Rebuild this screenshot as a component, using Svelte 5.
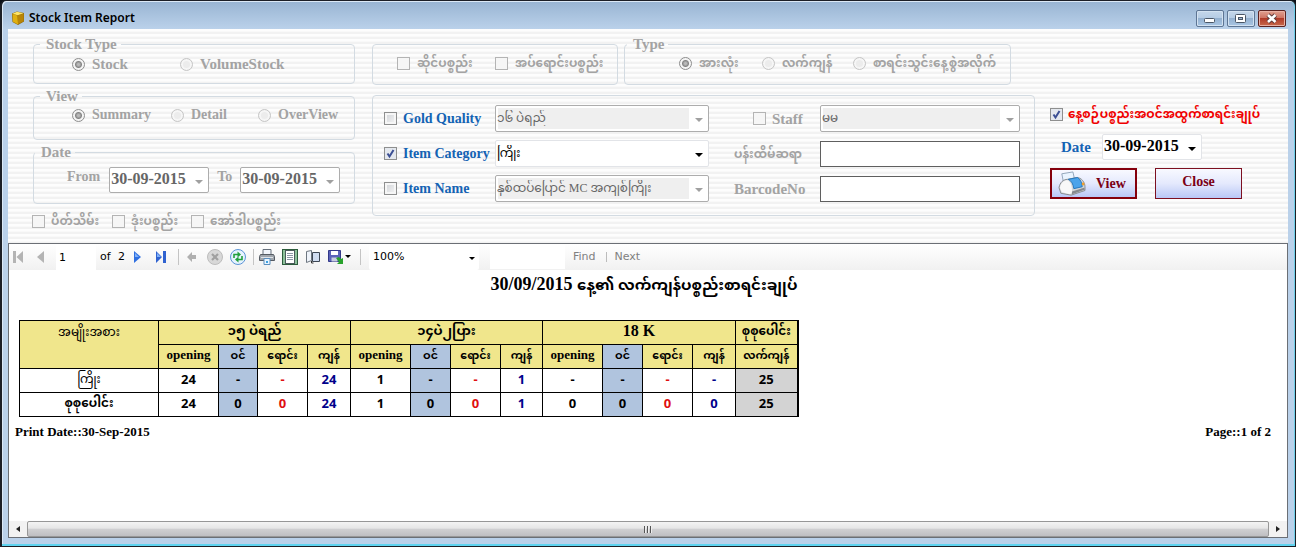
<script>
  const groups = [
    { name: '၁၅ ပဲရည်', item: ['24', '-', '-', '24'], total: ['24', '0', '0', '24'] },
    { name: '၁၄ပဲ၂ပြား', item: ['1', '-', '-', '1'], total: ['1', '0', '0', '1'] },
    { name: '18 K', latin: true, item: ['-', '-', '-', '-'], total: ['0', '0', '0', '0'] }
  ];
  const subheads = ['opening', 'ဝင်', 'ရောင်း', 'ကျန်'];
  const kinds = ['open', 'in', 'sold', 'rest'];
  const rows = [
    { label: 'ကြိုး', key: 'item', sum: '25' },
    { label: 'စုစုပေါင်း', key: 'total', sum: '25' }
  ];
  const widths = [139, 60, 39, 50, 43, 60, 40, 50, 42, 60, 40, 50, 43, 62];
</script>

<div class="window">
  <header class="titlebar">
    <svg class="appicon" viewBox="0 0 14 14" width="14" height="14" aria-hidden="true">
      <path d="M1 2.5 6 .5 13 2v8.5L7 14 1.5 11z" fill="#8a6508" />
      <path d="M1.5 3 6.5 4.5 7 13.5 2 10.7z" fill="#e0b010" />
      <path d="M6.8 4.5 12.7 2.5v7.8L7 13.3z" fill="#b88508" />
      <path d="M1.5 2.7 6 .8l6.5 1.4-5.8 2z" fill="#ffe566" />
    </svg>
    <h1>Stock Item Report</h1>
    <div class="winbtns">
      <button type="button" aria-label="Minimize">
        <svg viewBox="0 0 28 15" width="28" height="15"><rect x="8.500" y="7.500" width="10" height="4" rx="1" fill="#fff" stroke="#4a5666" /></svg>
      </button>
      <button type="button" aria-label="Restore">
        <svg viewBox="0 0 28 15" width="28" height="15"><rect x="8.500" y="3.500" width="10" height="8" rx="1" fill="#fff" stroke="#4a5666" /><rect x="11.500" y="6.500" width="4" height="2" fill="#9fb8d4" stroke="#4a5666" /></svg>
      </button>
      <button type="button" class="x" aria-label="Close window">
        <svg viewBox="0 0 28 15" width="28" height="15"><path d="m10 4 7.500 7M17.500 4 10 11" stroke="#5d3a3a" stroke-width="4.500" /><path d="m10 4 7.500 7M17.500 4 10 11" stroke="#fff" stroke-width="2.600" /></svg>
      </button>
    </div>
  </header>

  <main>
    <form class="filters" onsubmit={(e) => e.preventDefault()}>
      <div class="left">
        <fieldset class="stock" disabled>
          <legend>Stock Type</legend>
          <label><input type="radio" name="stock" checked /> Stock</label>
          <label><input type="radio" name="stock" /> VolumeStock</label>
        </fieldset>
        <fieldset class="view" disabled>
          <legend>View</legend>
          <label><input type="radio" name="view" checked /> Summary</label>
          <label><input type="radio" name="view" /> Detail</label>
          <label><input type="radio" name="view" /> OverView</label>
        </fieldset>
        <fieldset class="dates" disabled>
          <legend>Date</legend>
          <label for="from">From</label>
          <span class="combo off"><input id="from" value="30-09-2015" /></span>
          <label for="to">To</label>
          <span class="combo off"><input id="to" value="30-09-2015" /></span>
        </fieldset>
        <div class="extras">
          <label class="mm"><input type="checkbox" disabled /> ပိတ်သိမ်း</label>
          <label class="mm"><input type="checkbox" disabled /> ဒုံးပစ္စည်း</label>
          <label class="mm"><input type="checkbox" disabled /> အော်ဒါပစ္စည်း</label>
        </div>
      </div>

      <div class="middle">
        <div class="pair">
          <div class="box goods">
            <label class="mm"><input type="checkbox" disabled /> ဆိုင်ပစ္စည်း</label>
            <label class="mm"><input type="checkbox" disabled /> အပ်ရောင်းပစ္စည်း</label>
          </div>
          <fieldset class="type" disabled>
            <legend>Type</legend>
            <label class="mm"><input type="radio" name="type" checked /> အားလုံး</label>
            <label class="mm"><input type="radio" name="type" /> လက်ကျန်</label>
            <label class="mm"><input type="radio" name="type" /> စာရင်းသွင်းနေ့စွဲအလိုက်</label>
          </fieldset>
        </div>
        <div class="box criteria">
          <label class="blue"><input type="checkbox" /> Gold Quality</label>
          <span class="combo off"><select disabled aria-label="Gold Quality"><option>၁၆ ပဲရည်</option></select></span>
          <label class="second staff"><input type="checkbox" disabled /> Staff</label>
          <span class="combo off"><select disabled aria-label="Staff"><option>မမ</option></select></span>

          <label class="blue"><input type="checkbox" checked /> Item Category</label>
          <span class="combo"><select aria-label="Item Category"><option>ကြိုး</option></select></span>
          <label class="second mm" for="smith">ပန်းထိမ်ဆရာ</label>
          <input class="text" id="smith" />

          <label class="blue"><input type="checkbox" /> Item Name</label>
          <span class="combo off"><select disabled aria-label="Item Name"><option>နှစ်ထပ်ပြောင် MC အကျစ်ကြိုး</option></select></span>
          <label class="second" for="barcode">BarcodeNo</label>
          <input class="text" id="barcode" />
        </div>
      </div>

      <div class="right">
        <label class="mm red"><input type="checkbox" checked /> နေ့စဉ်ပစ္စည်းအဝင်အထွက်စာရင်းချုပ်</label>
        <div class="day">
          <label class="blue" for="day">Date</label>
          <span class="combo"><input id="day" value="30-09-2015" /></span>
        </div>
        <div class="actions">
          <button type="submit" class="act default">
            <svg viewBox="0 0 32 28" width="32" height="26" aria-hidden="true">
              <path d="M5 3 17 1l2 9-12 3z" fill="#eaf4ff" stroke="#8fa2b8" />
              <path d="M2 18C3 12 7 9 11 9l10-2c5 0 9 5 9 10v4L15 26 4 24z" fill="#d2d5d8" stroke="#85898e" />
              <path d="M3 18c1-6 5-8 8-8 4 2 5 6 5 13l-2 2-9-2z" fill="#f8f8f8" />
              <path d="M12 9 22 7c3 2 5 6 5 10l-9 2c-1-5-2-8-6-10z" fill="#4ba3ea" stroke="#2275bc" />
              <path d="M16 22 29 18l1 2-14 5z" fill="#85898e" />
              <circle cx="28" cy="14" r="1.500" fill="#f0a030" />
            </svg>
            View
          </button>
          <button type="button" class="act">Close</button>
        </div>
      </div>
    </form>

    <section class="viewer">
      <nav class="toolbar" aria-label="Report toolbar">
        <button type="button" class="first" disabled aria-label="First page"><svg viewBox="0 0 12 12" width="12" height="12"><path d="M1 0h3v12H1zM11 0v12L4.500 6z" fill="#b4b4b4" /></svg></button>
        <button type="button" class="prev" disabled aria-label="Previous page"><svg viewBox="0 0 8 12" width="8" height="12"><path d="M7 0v12L0 6z" fill="#b4b4b4" /></svg></button>
        <input class="pageno" value="1" aria-label="Current page" />
        <span class="of">of</span><span class="count">2</span>
        <button type="button" class="next" aria-label="Next page"><svg viewBox="0 0 8 12" width="8" height="12"><path d="M1 0v12L8 6z" fill="#2f6fe0" /><path d="m2 2 4 4H2z" fill="#7fb0f8" /></svg></button>
        <button type="button" class="last" aria-label="Last page"><svg viewBox="0 0 12 12" width="12" height="12"><path d="M1 0v12l6-6zM8 0h3v12H8z" fill="#2f62d0" /><path d="m2 2 4 4H2z" fill="#7fb0f8" /></svg></button>
        <i class="sep"></i>
        <button type="button" class="back" disabled aria-label="Back"><svg viewBox="0 0 10 10" width="10" height="10"><path d="M0 5 5 0v3h4v4H5v3z" fill="#b0b0b0" /></svg></button>
        <button type="button" class="stop" disabled aria-label="Stop"><svg viewBox="0 0 16 16" width="16" height="16"><circle cx="8" cy="8" r="7.500" fill="#d8d8d8" stroke="#bdbdbd" /><path d="m5 5 6 6m0-6-6 6" stroke="#a0a0a0" stroke-width="2.200" /></svg></button>
        <button type="button" class="refresh" aria-label="Refresh"><svg viewBox="0 0 16 16" width="16" height="16"><circle cx="8" cy="8" r="7.500" fill="#e6f3ff" stroke="#5b94d6" /><path d="M4 9V5.500h4M12 7v3.500H8" fill="none" stroke="#22a03c" stroke-width="1.600" /><path d="M7.500 2.500v6l3.500-3zM8.500 7.500v6L5 10.500z" fill="#22a03c" /></svg></button>
        <i class="sep short"></i>
        <button type="button" class="print" aria-label="Print"><svg viewBox="0 0 16 16" width="16" height="16"><path d="M4 .5h8V6H4z" fill="#f2f6fc" stroke="#66707c" /><path d="M1.500 5.500h13l1 2v4H.5v-4z" fill="#a0a6ad" stroke="#555b63" /><path d="M2 8.500h12" stroke="#dfe4ea" /><path d="M5 9.500h6v6H5z" fill="#e9f5ff" stroke="#5c8fbe" /><path d="M7 12h2v2H7z" fill="#3ea0e0" /></svg></button>
        <button type="button" class="layout" aria-label="Print layout"><svg viewBox="0 0 16 16" width="16" height="16"><rect x=".5" y=".5" width="15" height="15" fill="#8cc09a" stroke="#2c5c3c" /><rect x="3.500" y="1.500" width="9" height="13" fill="#fff" stroke="#4a5a5a" /><path d="M5 4.500h6M5 6.500h6M5 8.500h6M5 10.500h6" stroke="#8a96a4" /></svg></button>
        <button type="button" class="setup" aria-label="Page setup"><svg viewBox="0 0 16 14" width="16" height="14"><path d="M1.500 1.500 6.500.5v10l-5 2z" fill="#eef3fa" stroke="#6d7680" /><path d="M7.500 2.500h7v9h-7z" fill="#cfdcf0" stroke="#3c4653" /><path d="M6.500 11v2h2" fill="none" stroke="#333" /></svg></button>
        <button type="button" class="export" aria-label="Export"><svg viewBox="0 0 23 16" width="23" height="16"><path d="M.5 1.500h12v11H.5z" fill="#5a62b8" stroke="#33398a" /><path d="M3 2h7v4H3z" fill="#fff" /><path d="M3.500 8.500h6v4h-6z" fill="#c9cee0" /><path d="m8 9 3-1 2 2 2-1v6H9l2-2z" fill="#28a22c" /><path d="M17 6h6l-3 3z" fill="#000" /></svg></button>
        <i class="sep"></i>
        <span class="combo zoom"><select aria-label="Zoom"><option>100%</option></select></span>
        <input class="query" aria-label="Find text" />
        <button type="button" class="word" disabled>Find</button>
        <i class="bar"></i>
        <button type="button" class="word" disabled>Next</button>
      </nav>

      <article class="report">
        <h2>30/09/2015 <span>နေ့၏ လက်ကျန်ပစ္စည်းစာရင်းချုပ်</span></h2>
        <table>
          <colgroup>{#each widths as w}<col style="width:{w}px" />{/each}</colgroup>
          <thead>
            <tr>
              <th rowspan="2" class="kind">အမျိုးအစား</th>
              {#each groups as g}<th colspan="4" class="group" class:latin={g.latin}>{g.name}</th>{/each}
              <th>စုစုပေါင်း</th>
            </tr>
            <tr class="sub">
              {#each groups as g}
                {#each subheads as s, i}<th class={kinds[i]}>{s}</th>{/each}
              {/each}
              <th>လက်ကျန်</th>
            </tr>
          </thead>
          <tbody>
            {#each rows as r}
              <tr>
                <th class={r.key}>{r.label}</th>
                {#each groups as g}
                  {#each g[r.key] as v, i}<td class={kinds[i]}>{v}</td>{/each}
                {/each}
                <td class="sum">{r.sum}</td>
              </tr>
            {/each}
          </tbody>
        </table>
        <footer><span>Print Date::30-Sep-2015</span><span>Page::1 of 2</span></footer>
      </article>

      <div class="scroll">
        <button type="button" aria-label="Scroll left"><svg viewBox="0 0 4 6" width="4" height="6"><path d="M4 0v6L0 3z" fill="#222" /></svg></button>
        <div class="thumb"><i></i><i></i><i></i></div>
        <button type="button" aria-label="Scroll right"><svg viewBox="0 0 4 6" width="4" height="6"><path d="M0 0v6l4-3z" fill="#222" /></svg></button>
      </div>
    </section>
  </main>
</div>

<style>
  :global(body) { margin: 0; background: #0b1018; }
  * { box-sizing: border-box; }
  .window {
    min-height: 100vh;
    display: flex;
    flex-direction: column;
    border: 1px solid #1c1f26;
    border-left-width: 2px;
    border-radius: 6px 6px 0 0;
    padding: 0 7px 8px 6px;
    background: linear-gradient(#98b4d2, #bad1ea 28px, #bad1ea);
    box-shadow: inset 0 -2px #5fd4f0, inset 1px 1px #dce9f6, inset -1px 0 #6fd0ea;
    font: bold 15px/16px "Liberation Serif", "Noto Sans Myanmar", serif;
  }
  button, input, select { font: inherit; margin: 0; }
  .titlebar { display: flex; align-items: center; height: 28px; padding: 6px 2px 0 3px; }
  h1 { flex: 1; margin: 0 0 0 4px; font: 600 12px/16px "Noto Sans", sans-serif; color: #000; }
  .winbtns { display: flex; gap: 3px; }
  .winbtns button {
    display: flex; padding: 0; height: 17px; align-items: center; width: 28px; overflow: hidden;
    border: 1px solid #5d7594; border-radius: 2px;
    background: linear-gradient(#c5d7ea, #b4cbe4 50%, #94b1d0 50%, #a9c6e4);
    box-shadow: inset 0 0 0 1px #d3e2f1;
  }
  .winbtns svg { flex: none; margin-left: -1px; }
  .winbtns .x { border-color: #5b2220; background: linear-gradient(#e0a090, #cd7060 50%, #b03a28 50%, #c86a4c); box-shadow: inset 0 0 0 1px #e8b0a4; }

  main { flex: 1; display: flex; flex-direction: column; }
  .filters {
    display: flex;
    height: 214px;
    padding: 8px 0 0 25px;
    color: #a3a3a3;
    background: repeating-linear-gradient(#fdfdfd 0 2px, #f9f9f9 2px 3px, #f2f2f2 3px 5px);
  }
  .left { width: 322px; margin-right: 17px; display: flex; flex-direction: column; }
  .middle { flex: 1; min-width: 0; margin-right: 15px; }
  .right { width: 238px; padding-top: 68px; }
  fieldset, .box { border: 1px solid #d3dbe2; border-radius: 4px; margin: 0; min-width: 0; }
  fieldset { padding: 0; display: flex; }
  legend { padding: 0 4px 0 6px; margin-left: 6px; line-height: 14px; }
  label { display: flex; align-items: center; white-space: nowrap; gap: 7px; }
  .mm { font-size: 12px; }

  input[type='radio'], input[type='checkbox'] {
    appearance: none; flex: none; width: 13px; height: 13px; border: 1px solid #8e8f8f;
    background: linear-gradient(135deg, #cfd2d6, #f6f6f6); box-shadow: inset 0 0 0 2px #f6f6f6;
  }
  input[type='radio'] { border-radius: 50%; }
  input:disabled[type='radio'] { border-color: #c6c6c6; background: #ececec; }
  input:disabled[type='radio']:checked { border-color: #8e8e8e; background: radial-gradient(circle, #b9b9b9 0 1px, #858585 3px, #f4f4f4 4px); box-shadow: none; }
  input:disabled[type='checkbox'] { border-color: #b4b4b4; background: #f6f6f6; }
  input[type='checkbox']:checked {
    background: url("data:image/svg+xml,%3Csvg xmlns='http://www.w3.org/2000/svg' viewBox='0 0 11 11'%3E%3Cpath d='M2.500 5.500 4.500 8.500 8.500 2' fill='none' stroke='%233b4f94' stroke-width='2'/%3E%3C/svg%3E") center / 11px, #e4e8ee;
    box-shadow: none;
  }

  .stock { height: 47px; }
  .stock label { height: 26px; }
  .stock label:nth-of-type(1) { margin-left: 38px; width: 108px; }
  .view { height: 51px; margin-top: 5px; }
  .view label { height: 24px; font-size: 14px; }
  .view label:nth-of-type(1) { margin-left: 38px; width: 99px; }
  .view label:nth-of-type(2) { width: 87px; }
  .dates { height: 59px; margin-top: 5px; }
  .dates legend { margin-left: 1px; }
  .dates label { height: 36px; font-size: 14px; }
  .dates label:nth-of-type(1) { margin: 0 9px 0 33px; }
  .dates label:nth-of-type(2) { margin: 0 8px; }
  .dates .combo { width: 100px; margin-top: 8px; }
  .extras { display: flex; gap: 13px; margin: 8px 0 0 -1px; height: 18px; }
  .extras label { gap: 6px; }

  .combo { position: relative; display: flex; height: 26px; border: 1px solid #e2e4e8; border-radius: 2px; background: #fff; }
  .combo::after {
    content: ''; position: absolute; right: 5px; top: 12px; pointer-events: none;
    border: solid transparent; border-width: 4px 4px 0; border-top-color: #000;
  }
  .combo.off { border-color: #adadad; }
  .combo.off::after { border-top-color: #a0a0a0; }
  .combo select, .combo input {
    appearance: none; border: 0; outline: 0; width: 100%; min-width: 0; padding: 0 18px 2px 1px;
    background: none; color: #000; opacity: 1; font-size: 16px;
  }
  .combo select { font-weight: normal; font-size: 12px; }
  .off select, .off input { color: #666; }
  .criteria .combo { height: 27px; }
  .criteria .off select { background: linear-gradient(#efefef, #efefef) 2px 2px / calc(100% - 21px) 21px no-repeat; }

  .pair { display: flex; gap: 6px; }
  .goods { width: 246px; height: 41px; margin-top: 7px; padding: 0 0 3px 24px; display: flex; }
  .goods label:first-child { width: 98px; }
  .type { flex: 1; max-width: 387px; height: 48px; }
  .type legend { margin-left: 2px; }
  .type label { height: 24px; }
  .type label:nth-of-type(1) { margin-left: 54px; width: 83px; }
  .type label:nth-of-type(2) { width: 91px; }
  .criteria {
    display: grid; grid-template-columns: 111px minmax(0, 1fr) 111px 200px; align-items: center;
    row-gap: 8px; height: 121px; margin-top: 10px; padding: 9px 14px 0 11px; align-content: start;
  }
  .blue { color: #1463b4; }
  .criteria .blue { font-size: 14px; gap: 6px; }
  .second { padding-left: 25px; }
  .staff { padding-left: 44px; gap: 6px; }
  .text { width: 100%; height: 26px; border: 1px solid #5f5f5f; background: #fff; padding: 0 4px; outline: 0; }

  .red { color: #f00000; height: 18px; gap: 5px; }
  .day { display: flex; align-items: center; margin: 11px 0 8px 11px; gap: 11px; }
  .day .combo { width: 100px; }
  .actions { display: flex; gap: 18px; }
  .act {
    width: 87px; height: 31px; padding: 0 0 3px; border: 1px solid #7d1020; color: #7b0014; font-size: 14px;
    background: linear-gradient(#f8f9ff, #e4e9fd 50%, #b9c7f6);
  }
  .default { display: flex; align-items: center; gap: 8px; border: 2px solid #85000c; padding: 0 0 0 4px; }

  .viewer { flex: 1; display: flex; flex-direction: column; background: #fff; border: 1px solid #6b6f75; }
  .toolbar {
    display: flex; align-items: center; height: 26px; padding-left: 3px; flex: none;
    background: linear-gradient(#fff, #f1f1f1); font: 11px/14px "DejaVu Sans", sans-serif; color: #000;
  }
  .toolbar button { display: flex; flex: none; border: 0; padding: 0; background: none; }
  .prev { margin-left: 13px; }
  .pageno { width: 40px; height: 25px; border: 0; padding: 0 3px; margin: 0 4px 0 11px; background: #fff; }
  .of { width: 18px; }
  .count { width: 15px; }
  .last { margin-left: 14px; }
  .sep { width: 1px; height: 16px; background: #c4c4c4; margin: 0 8px 0 11px; }
  .sep.short { margin: 0 5px 0 7px; }
  .stop { margin-left: 10px; }
  .refresh, .layout, .setup, .export { margin-left: 7px; }
  .export + .sep { margin-left: 9px; }
  .toolbar .zoom { width: 110px; height: 25px; border: 0; margin-right: 11px; }
  .zoom select { font-size: 11px; padding-left: 4px; padding-bottom: 0; }
  .zoom::after { border-width: 3px 3px 0; right: 4px; }
  .query { width: 75px; height: 24px; border: 0; background: #fff; margin-right: 8px; }
  .toolbar .word { color: #808080; }
  .bar { width: 1px; height: 10px; background: #bcbcbc; margin: 0 8px 0 10px; }

  .report { flex: 1; color: #000; }
  h2 { margin: 0; padding-right: 8px; text-align: center; font-size: 18px; line-height: 28px; height: 50px; }
  h2 span { font-size: 15px; }
  table { border-collapse: collapse; table-layout: fixed; width: 778px; margin-left: 10px; border-right: 2px solid #000; }
  th, td { height: 24px; padding: 0 0 4px; border: 1px solid #000; text-align: center; line-height: 18px; white-space: nowrap; }
  th { font-size: 12px; }
  thead th { background: #f0e68c; }
  .sub th { font-size: 11px; }
  .sub .open { font-size: 13px; }
  th.group { font-size: 13px; }
  th.latin { font-size: 16px; }
  th.kind, th.item { font-weight: normal; }
  th.kind { vertical-align: top; padding-top: 2px; }
  td { font: bold 13px/18px "Noto Sans", sans-serif; }
  .in, thead .in { background: #b0c4de; }
  td.sold { color: #e01010; }
  td.rest { color: #00008b; }
  .sum { background: #d3d3d3; }
  footer { display: flex; justify-content: space-between; padding: 8px 16px 0 6px; font-size: 13px; line-height: 14px; }

  .scroll { display: flex; height: 16px; background: #f2f2f2; }
  .scroll button { width: 18px; border: 0; padding: 0; background: none; display: flex; align-items: center; justify-content: center; }
  .thumb {
    flex: 1; display: flex; gap: 1px; align-items: center; justify-content: center; border: 1px solid #979797; border-radius: 2px;
    background: linear-gradient(#f4f4f4, #e6e6e6 45%, #d0d0d2 50%, #bfbfc2);
  }
  .thumb i { width: 2px; height: 7px; background: linear-gradient(90deg, #555 50%, #eee 50%); }
</style>
